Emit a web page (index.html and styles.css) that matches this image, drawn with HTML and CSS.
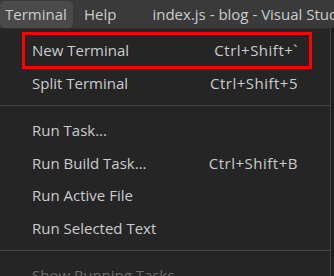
FILE: index.html
```html
<!DOCTYPE html>
<html lang="en">
<head>
    <meta charset="UTF-8">
    <meta name="viewport" content="width=device-width, initial-scale=1.0">
    <title>Terminal menu</title>
    <link rel="stylesheet" href="styles.css">
</head>
<body>
    <div class="titlebar">
        <div class="menu-title active">Terminal</div>
        <div class="menu-title">Help</div>
        <div class="window-title">index.js - blog - Visual Studio Code</div>
    </div>
    <div class="dropdown">
        <div class="item highlighted">
            <span class="label">New Terminal</span>
            <span class="keys">Ctrl+Shift+`</span>
        </div>
        <div class="item">
            <span class="label">Split Terminal</span>
            <span class="keys">Ctrl+Shift+5</span>
        </div>
        <div class="separator"></div>
        <div class="item">
            <span class="label">Run Task...</span>
        </div>
        <div class="item">
            <span class="label">Run Build Task...</span>
            <span class="keys">Ctrl+Shift+B</span>
        </div>
        <div class="item">
            <span class="label">Run Active File</span>
        </div>
        <div class="item">
            <span class="label">Run Selected Text</span>
        </div>
        <div class="separator"></div>
        <div class="item disabled">
            <span class="label">Show Running Tasks...</span>
        </div>
    </div>
</body>
</html>
```
FILE: styles.css
```css
body {
    margin: 0;
    background-color: #1e1e1e;
    font-family: "Open Sans", "Noto Sans", sans-serif;
    font-size: 15px;
    color: #cccccc;
    overflow: hidden;
}
.titlebar {
    display: flex;
    align-items: center;
    height: 28px;
    background-color: #3a3a3a;
    white-space: nowrap;
    overflow: hidden;
}
.menu-title {
    height: 27px;
    line-height: 27px;
    padding: 0 8px 0 5px;
    border-radius: 5px;
    color: #cccccc;
}
.menu-title.active {
    background-color: #4a4a4a;
    width: 60px;
}
.menu-title + .menu-title {
    margin-left: 6px;
}
.window-title {
    margin-left: 28px;
    color: #cccccc;
}
.dropdown {
    width: 330px;
    background-color: #252526;
    border-top: 1px solid #2f2f2f;
    border-right: 1px solid #454545;
    padding-top: 5px;
}
.item {
    position: relative;
    display: flex;
    justify-content: space-between;
    align-items: center;
    height: 32.5px;
    padding: 0 32px;
}
.keys {
    color: #cccccc;
    letter-spacing: 0.5px;
}
.highlighted::after {
    content: "";
    position: absolute;
    left: 22px;
    top: -2px;
    width: 284px;
    height: 31px;
    border: 3px solid #ff0000;
}
.separator {
    height: 6px;
    border-bottom: 1px solid #454545;
    margin-bottom: 8px;
}
.disabled {
    color: #6b6b6b;
}
```
